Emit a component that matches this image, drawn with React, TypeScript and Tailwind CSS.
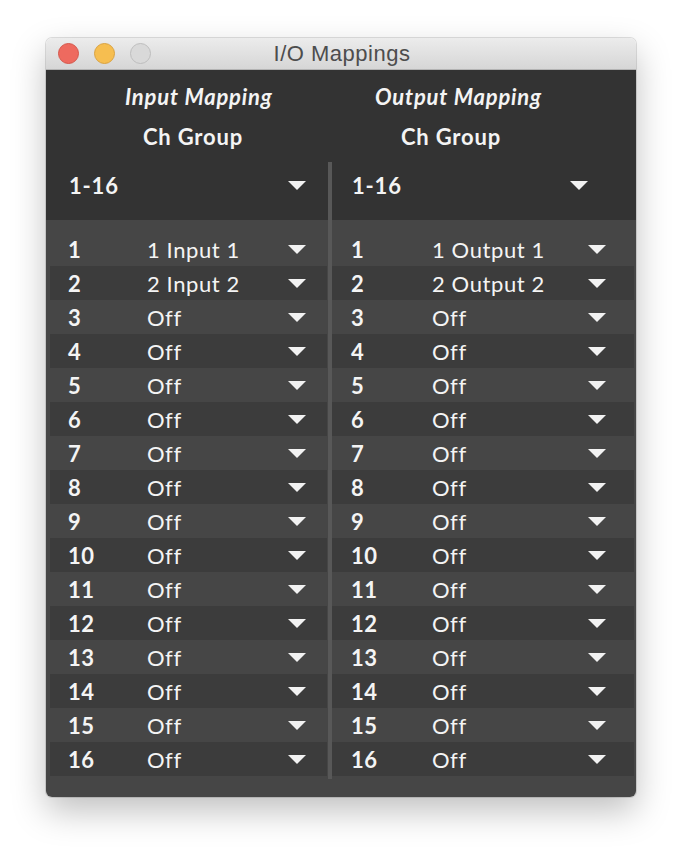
import React from "react";

const inputs = ["1 Input 1", "2 Input 2"];
const outputs = ["1 Output 1", "2 Output 2"];
const rows = Array.from({ length: 16 }, (_, i) => i + 1);

const Arrow = () => (
  <svg width="18" height="9" viewBox="0 0 18 9" className="shrink-0">
    <path d="M0 0 H18 L9 9 Z" fill="#f2f2f2" />
  </svg>
);

const App = () => {
  return (
    <div className="w-[682px] h-[852px] bg-white pt-[38px] pl-[46px] font-['Lato',sans-serif]">
      <div className="w-[590px] rounded-[6px] overflow-hidden shadow-[0_14px_34px_rgba(0,0,0,0.25),0_0_0_1px_rgba(0,0,0,0.12)]">
        {/* title bar */}
        <div className="h-[32px] flex items-center relative bg-gradient-to-b from-[#ececec] to-[#d6d6d6] border-b border-[#b3b3b3]">
          <div className="flex gap-[15px] pl-[12px]">
            <div className="w-[21px] h-[21px] rounded-full bg-[#ee6a5f] border border-[#d4574b]" />
            <div className="w-[21px] h-[21px] rounded-full bg-[#f6be50] border border-[#d9a240]" />
            <div className="w-[21px] h-[21px] rounded-full bg-[#d9d9d9] border border-[#bdbdbd]" />
          </div>
          <div className="absolute inset-0 flex items-center justify-center pl-[2px] text-[22px] tracking-[0.5px] text-[#4d4d4d] font-['Liberation_Sans',sans-serif]">
            I/O Mappings
          </div>
        </div>

        {/* header */}
        <div className="bg-[#333333] text-[#f4f4f4] text-[22px] tracking-[0.8px] font-bold">
          <div className="flex pt-[10px]">
            <div className="w-[282px]">
              <div className="h-[32px] flex items-center italic pl-[79px]">Input Mapping</div>
              <div className="h-[41px] flex items-center pt-[8px] pl-[97px]">Ch Group</div>
            </div>
            <div className="w-[4px]" />
            <div className="flex-1">
              <div className="h-[32px] flex items-center italic pl-[43px]">Output Mapping</div>
              <div className="h-[41px] flex items-center pt-[8px] pl-[69px]">Ch Group</div>
            </div>
          </div>
          <div className="flex h-[58px] mt-[9px]">
            <div className="w-[282px] h-[46px] flex items-center pl-[23px] pr-[22px]">
              <span className="flex-1">1-16</span>
              <Arrow />
            </div>
            <div className="w-[4px] bg-[#585858]" />
            <div className="flex-1 h-[46px] flex items-center pl-[20px] pr-[48px]">
              <span className="flex-1">1-16</span>
              <Arrow />
            </div>
          </div>
        </div>

        {/* rows */}
        <div className="bg-[#464646] flex pl-[4px] pr-[2px] pt-[12px] pb-[19px] text-[#f4f4f4] text-[22px] tracking-[0.6px]">
          <div className="w-[277px] pb-[2px]">
            {rows.map((n) => (
              <div
                key={n}
                className={`h-[34px] flex items-center pl-[18px] pr-[21px] ${n % 2 === 0 ? "bg-[#3c3c3c]" : ""}`}
              >
                <span className="w-[79px] font-bold">{n}</span>
                <span className="flex-1">{inputs[n - 1] ?? "Off"}</span>
                <Arrow />
              </div>
            ))}
          </div>
          <div className="w-[4px] bg-[#585858] ml-[1px] -mt-[12px] mb-[-1px]" />
          <div className="flex-1 pb-[2px]">
            {rows.map((n) => (
              <div
                key={n}
                className={`h-[34px] flex items-center pl-[19px] pr-[28px] ${n % 2 === 0 ? "bg-[#3c3c3c]" : ""}`}
              >
                <span className="w-[81px] font-bold">{n}</span>
                <span className="flex-1">{outputs[n - 1] ?? "Off"}</span>
                <Arrow />
              </div>
            ))}
          </div>
        </div>
      </div>
    </div>
  );
};

export default App;
